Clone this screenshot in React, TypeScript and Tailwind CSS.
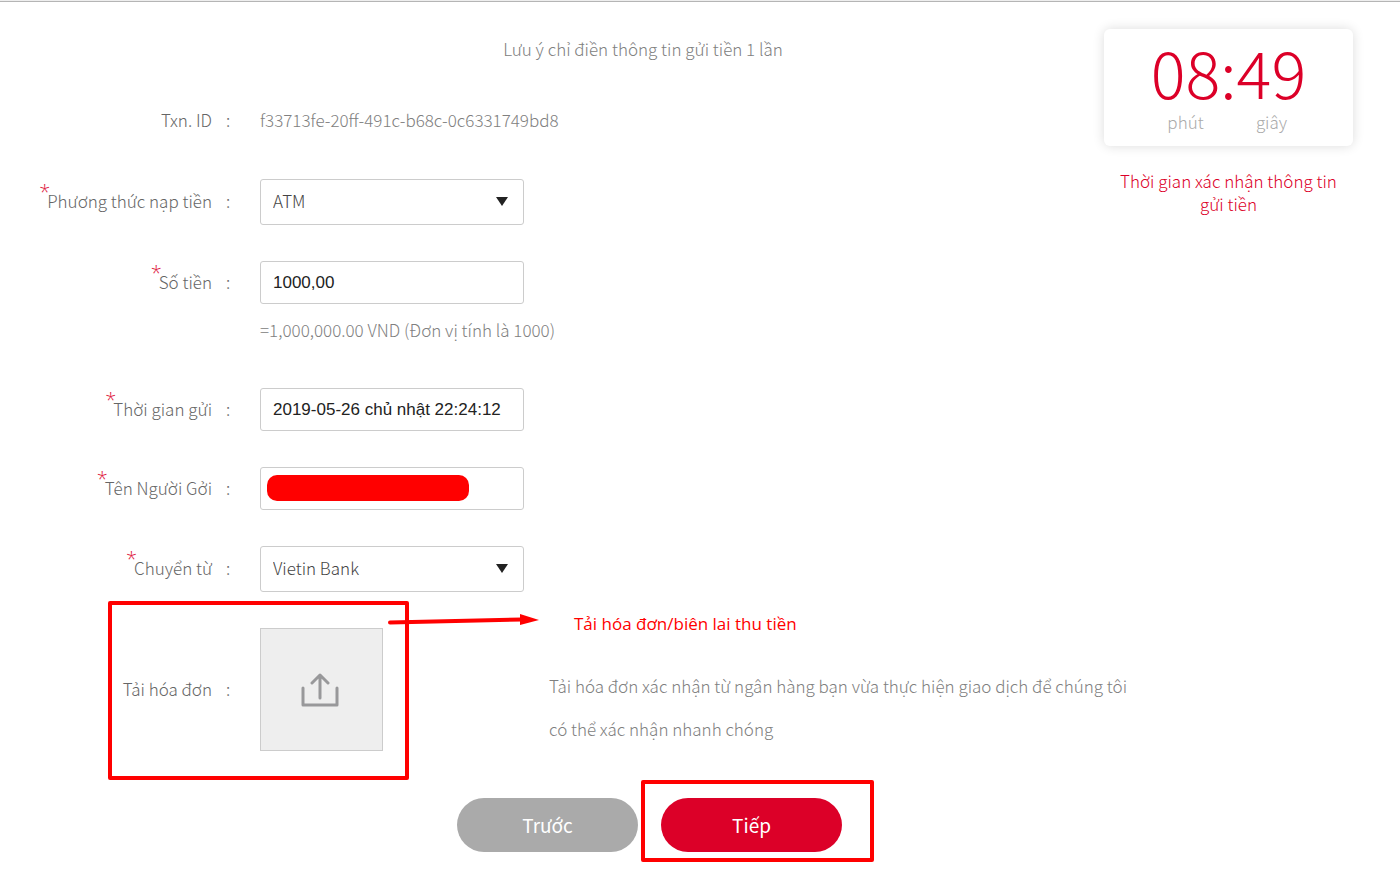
import { useState } from "react";
import type { ReactNode } from "react";

type FieldProps = {
  id?: string;
  label: string;
  required?: boolean;
  children: ReactNode;
};

function Field({ id, label, required, children }: FieldProps) {
  return (
    <div className="flex items-center">
      <div className="w-[212px] shrink-0 pb-0.5 text-right">
        <label htmlFor={id} className="relative text-[#666]">
          {required && (
            <span className="absolute -left-2 -top-2 font-['Open_Sans',sans-serif] text-[20px] leading-6 text-[#e0223f]">*</span>
          )}
          {label}
        </label>
      </div>
      <span className="w-12 shrink-0 pb-0.5 pl-3.5 text-[#666]">:</span>
      {children}
    </div>
  );
}

type SelectProps = {
  id: string;
  options: string[];
};

function Select({ id, options }: SelectProps) {
  const [value, setValue] = useState(options[0]);

  return (
    <div className="relative w-[264px]">
      <select
        id={id}
        value={value}
        onChange={(e) => setValue(e.target.value)}
        className="h-[46px] w-full appearance-none rounded-[3px] border border-[#ccc] bg-white px-3 pb-0.5 text-[#444]"
      >
        {options.map((option) => (
          <option key={option}>{option}</option>
        ))}
      </select>
      <svg viewBox="0 0 12 9" className="pointer-events-none absolute right-4 top-[18px] h-[9px] w-3 fill-[#222]">
        <path d="M0 0h12L6 9z" />
      </svg>
    </div>
  );
}

const inputClass =
  "h-[43px] w-[264px] rounded-[3px] border border-[#ccc] bg-white px-3 font-['Liberation_Sans',Arial,sans-serif] font-normal text-[#222]";

export default function App() {
  const [amount, setAmount] = useState("1000,00");
  const [time, setTime] = useState("2019-05-26 chủ nhật 22:24:12");
  const [sender, setSender] = useState("");

  return (
    <div className="min-h-screen border-t border-[#eee] bg-white font-['Noto_Sans_CJK_SC','Noto_Sans',sans-serif] text-[17px] font-light leading-6 text-[#808080]">
      <form onSubmit={(e) => e.preventDefault()} className="border-t border-[#b5b5b5]">
        <div className="flex items-start">
          {/* Fields */}
          <div className="flex-1">
            <p className="pl-[182px] pt-[35px] text-center">Lưu ý chỉ điền thông tin gửi tiền 1 lần</p>

            <div className="mt-[47px]">
              <Field label="Txn. ID">
                <span className="pb-0.5">f33713fe-20ff-491c-b68c-0c6331749bd8</span>
              </Field>
            </div>

            <div className="mt-[45px] flex flex-col gap-9">
              <Field id="method" label="Phương thức nạp tiền" required>
                <Select id="method" options={["ATM", "Internet Banking"]} />
              </Field>
              <div>
                <Field id="amount" label="Số tiền" required>
                  <input id="amount" className={inputClass} value={amount} onChange={(e) => setAmount(e.target.value)} />
                </Field>
                <p className="mb-2.5 mt-3.5 pl-[260px]">=1,000,000.00 VND (Đơn vị tính là 1000)</p>
              </div>
              <Field id="time" label="Thời gian gửi" required>
                <input id="time" className={inputClass} value={time} onChange={(e) => setTime(e.target.value)} />
              </Field>
              <Field id="sender" label="Tên Người Gởi" required>
                <div className="relative">
                  <input id="sender" className={inputClass} value={sender} onChange={(e) => setSender(e.target.value)} />
                  <div className="pointer-events-none absolute left-[7px] top-2 h-[26px] w-[202px] rounded-[10px] bg-[#f00]"></div>
                </div>
              </Field>
              <Field id="bank" label="Chuyển từ" required>
                <Select id="bank" options={["Vietin Bank", "Vietcombank"]} />
              </Field>
            </div>
          </div>

          {/* Countdown */}
          <aside className="mr-[47px] mt-[27px] w-[249px] shrink-0 text-center">
            <div className="rounded-md bg-white pb-3 pt-2 shadow-[0_0_12px_rgba(0,0,0,0.14)]">
              <div className="pb-1 text-[65px] leading-[69px] text-[#dc0028]">08:49</div>
              <div className="flex justify-center text-[#aaa]">
                <span className="w-[86px]">phút</span>
                <span className="w-[86px]">giây</span>
              </div>
            </div>
            <p className="mt-[23px] px-3 leading-[23px] text-[#dc0028]">Thời gian xác nhận thông tin gửi tiền</p>
          </aside>
        </div>

        {/* Receipt upload */}
        <div className="mt-[9px] flex items-start">
          <div className="relative ml-[108px] flex w-[301px] shrink-0 items-center rounded-[2px] border-4 border-[#f00] pb-[25px] pt-[23px]">
            <label htmlFor="receipt" className="w-[100px] pb-0.5 text-right text-[#666]">
              Tải hóa đơn
            </label>
            <span className="w-12 pb-0.5 pl-3.5 text-[#666]">:</span>
            <button
              id="receipt"
              type="button"
              className="flex h-[123px] w-[123px] items-center justify-center border border-[#ccc] bg-[#eee]"
            >
              <svg
                viewBox="0 0 38 34"
                fill="none"
                stroke="#98989a"
                strokeWidth="3"
                strokeLinecap="round"
                strokeLinejoin="round"
                className="mr-1 h-[34px] w-[38px]"
              >
                <path d="M2 15v17h34V15" />
                <path d="M19 25V2M11 10l8-8 8 8" />
              </svg>
            </button>
            <svg viewBox="0 0 152 14" className="pointer-events-none absolute -right-[135px] top-2 h-3.5 w-[152px]">
              <path d="M2 9.500L134 6.500" stroke="#f00" strokeWidth="4" strokeLinecap="round" />
              <path d="M132 1l19 6-19 5z" fill="#f00" />
            </svg>
          </div>
          <div className="pl-[140px] pt-[11px]">
            <p className="pl-[25px] font-['Open_Sans','Noto_Sans',sans-serif] text-[17px] font-normal text-[#f00]">
              Tải hóa đơn/biên lai thu tiền
            </p>
            <p className="mt-7 max-w-[590px] leading-[43px]">
              Tải hóa đơn xác nhận từ ngân hàng bạn vừa thực hiện giao dịch để chúng tôi có thể xác nhận nhanh chóng
            </p>
          </div>
        </div>

        {/* Actions */}
        <div className="flex items-end pl-[457px] text-[19px] font-normal text-white">
          <button type="button" className="mb-2.5 h-[54px] w-[181px] rounded-full bg-[#aaa]">
            Trước
          </button>
          <div className="ml-[3px] rounded-[2px] border-4 border-[#f00] pb-1.5 pl-4 pr-7 pt-3.5">
            <button type="submit" className="block h-[54px] w-[181px] rounded-full bg-[#dc0028]">
              Tiếp
            </button>
          </div>
        </div>
      </form>
    </div>
  );
}
